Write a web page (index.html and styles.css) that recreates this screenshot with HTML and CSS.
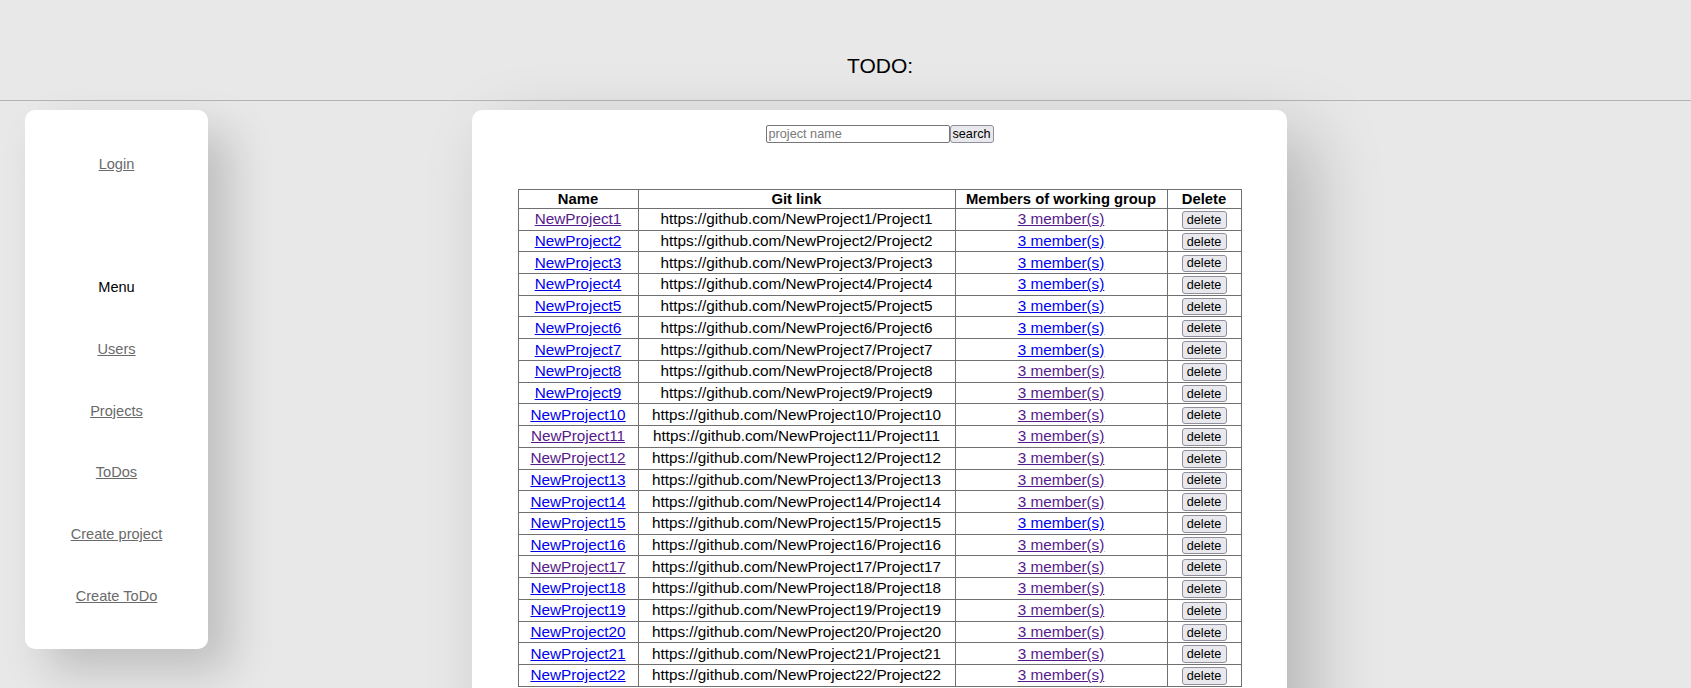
FILE: index.html
```html
<!DOCTYPE html>
<html lang="en">
<head>
<meta charset="utf-8">
<title>TODO</title>
<link rel="stylesheet" href="styles.css">
</head>
<body>
<header class="top">
  <div class="title">TODO:</div>
</header>
<div class="layout">
  <nav class="sidebar">
    <a class="side-link login" href="#login">Login</a>
    <div class="menu-title">Menu</div>
    <ul class="menu">
      <li><a class="side-link" href="#users">Users</a></li>
      <li><a class="side-link" href="#projects">Projects</a></li>
      <li><a class="side-link" href="#todos">ToDos</a></li>
      <li><a class="side-link" href="#create-project">Create project</a></li>
      <li><a class="side-link" href="#create-todo">Create ToDo</a></li>
    </ul>
  </nav>
  <main class="content">
    <form class="search">
      <input class="search-input" type="text" placeholder="project name">
      <button class="search-btn" type="button">search</button>
    </form>
    <table class="projects">
      <colgroup>
        <col class="c-name"><col class="c-git"><col class="c-mem"><col class="c-del">
      </colgroup>
      <thead>
        <tr><th>Name</th><th>Git link</th><th>Members of working group</th><th>Delete</th></tr>
      </thead>
      <tbody>
        <tr><td><a class="visited" href="#p1">NewProject1</a></td><td>https://github.com/NewProject1/Project1</td><td><a class="visited" href="#m1">3 member(s)</a></td><td><button class="del">delete</button></td></tr>
        <tr><td><a href="#p2">NewProject2</a></td><td>https://github.com/NewProject2/Project2</td><td><a href="#m2">3 member(s)</a></td><td><button class="del">delete</button></td></tr>
        <tr><td><a href="#p3">NewProject3</a></td><td>https://github.com/NewProject3/Project3</td><td><a href="#m3">3 member(s)</a></td><td><button class="del">delete</button></td></tr>
        <tr><td><a href="#p4">NewProject4</a></td><td>https://github.com/NewProject4/Project4</td><td><a href="#m4">3 member(s)</a></td><td><button class="del">delete</button></td></tr>
        <tr><td><a href="#p5">NewProject5</a></td><td>https://github.com/NewProject5/Project5</td><td><a href="#m5">3 member(s)</a></td><td><button class="del">delete</button></td></tr>
        <tr><td><a href="#p6">NewProject6</a></td><td>https://github.com/NewProject6/Project6</td><td><a href="#m6">3 member(s)</a></td><td><button class="del">delete</button></td></tr>
        <tr><td><a href="#p7">NewProject7</a></td><td>https://github.com/NewProject7/Project7</td><td><a href="#m7">3 member(s)</a></td><td><button class="del">delete</button></td></tr>
        <tr><td><a href="#p8">NewProject8</a></td><td>https://github.com/NewProject8/Project8</td><td><a class="visited" href="#m8">3 member(s)</a></td><td><button class="del">delete</button></td></tr>
        <tr><td><a href="#p9">NewProject9</a></td><td>https://github.com/NewProject9/Project9</td><td><a class="visited" href="#m9">3 member(s)</a></td><td><button class="del">delete</button></td></tr>
        <tr><td><a href="#p10">NewProject10</a></td><td>https://github.com/NewProject10/Project10</td><td><a class="visited" href="#m10">3 member(s)</a></td><td><button class="del">delete</button></td></tr>
        <tr><td><a class="visited" href="#p11">NewProject11</a></td><td>https://github.com/NewProject11/Project11</td><td><a class="visited" href="#m11">3 member(s)</a></td><td><button class="del">delete</button></td></tr>
        <tr><td><a class="visited" href="#p12">NewProject12</a></td><td>https://github.com/NewProject12/Project12</td><td><a class="visited" href="#m12">3 member(s)</a></td><td><button class="del">delete</button></td></tr>
        <tr><td><a href="#p13">NewProject13</a></td><td>https://github.com/NewProject13/Project13</td><td><a class="visited" href="#m13">3 member(s)</a></td><td><button class="del">delete</button></td></tr>
        <tr><td><a href="#p14">NewProject14</a></td><td>https://github.com/NewProject14/Project14</td><td><a class="visited" href="#m14">3 member(s)</a></td><td><button class="del">delete</button></td></tr>
        <tr><td><a href="#p15">NewProject15</a></td><td>https://github.com/NewProject15/Project15</td><td><a href="#m15">3 member(s)</a></td><td><button class="del">delete</button></td></tr>
        <tr><td><a href="#p16">NewProject16</a></td><td>https://github.com/NewProject16/Project16</td><td><a class="visited" href="#m16">3 member(s)</a></td><td><button class="del">delete</button></td></tr>
        <tr><td><a class="visited" href="#p17">NewProject17</a></td><td>https://github.com/NewProject17/Project17</td><td><a class="visited" href="#m17">3 member(s)</a></td><td><button class="del">delete</button></td></tr>
        <tr><td><a href="#p18">NewProject18</a></td><td>https://github.com/NewProject18/Project18</td><td><a class="visited" href="#m18">3 member(s)</a></td><td><button class="del">delete</button></td></tr>
        <tr><td><a href="#p19">NewProject19</a></td><td>https://github.com/NewProject19/Project19</td><td><a class="visited" href="#m19">3 member(s)</a></td><td><button class="del">delete</button></td></tr>
        <tr><td><a href="#p20">NewProject20</a></td><td>https://github.com/NewProject20/Project20</td><td><a class="visited" href="#m20">3 member(s)</a></td><td><button class="del">delete</button></td></tr>
        <tr><td><a href="#p21">NewProject21</a></td><td>https://github.com/NewProject21/Project21</td><td><a class="visited" href="#m21">3 member(s)</a></td><td><button class="del">delete</button></td></tr>
        <tr><td><a href="#p22">NewProject22</a></td><td>https://github.com/NewProject22/Project22</td><td><a class="visited" href="#m22">3 member(s)</a></td><td><button class="del">delete</button></td></tr>
      </tbody>
    </table>
  </main>
</div>
</body>
</html>
```
FILE: styles.css
```css
html, body {
  margin: 0;
  padding: 0;
  height: 688px;
  overflow: hidden;
}
body {
  background: #e8e8e8;
  font-family: "Liberation Sans", Arial, sans-serif;
  color: #000;
}
.top {
  height: 101px;
  border-bottom: 1px solid #b4b4b4;
  box-sizing: border-box;
  display: flex;
  align-items: flex-end;
  justify-content: center;
  padding-left: 69px;
  padding-bottom: 22px;
}
.title {
  font-size: 21px;
  line-height: 24px;
}
.layout {
  display: flex;
  align-items: flex-start;
  padding: 9px 0 0 25px;
  gap: 264px;
}
.sidebar {
  width: 183px;
  box-sizing: border-box;
  background: #fff;
  border-radius: 10px;
  box-shadow: 22px 22px 45px rgba(0, 0, 0, 0.18);
  padding: 44px 0 43px;
  display: flex;
  flex-direction: column;
  align-items: center;
  font-size: 14.6px;
  line-height: 20px;
}
.side-link {
  color: #6a6a6a;
  text-decoration: underline;
}
.menu-title {
  margin-top: 103px;
  color: #000;
}
.menu {
  list-style: none;
  margin: 41.8px 0 0;
  padding: 0;
  display: flex;
  flex-direction: column;
  align-items: center;
  gap: 41.8px;
}
.content {
  width: 815px;
  height: 620px;
  background: #fff;
  border-radius: 10px;
  box-shadow: 25px 25px 70px rgba(0, 0, 0, 0.22);
  padding-top: 14.5px;
  display: flex;
  flex-direction: column;
  align-items: center;
}
.search {
  display: flex;
  margin: 0 0 46px;
  height: 18px;
}
.search-input {
  box-sizing: border-box;
  width: 184px;
  height: 18px;
  margin: 0;
  padding: 0 2px;
  border: 1px solid #767676;
  border-radius: 2px;
  font-family: "Liberation Sans", Arial, sans-serif;
  font-size: 12.7px;
}
.search-input::placeholder {
  color: #7a7a7a;
}
.search-btn {
  box-sizing: border-box;
  width: 44px;
  height: 18px;
  margin: 0;
  padding: 0;
  border: 1px solid #8f8f9d;
  border-radius: 3px;
  background: #e9e9ed;
  font-family: "Liberation Sans", Arial, sans-serif;
  font-size: 12.7px;
  color: #000;
}
.projects {
  table-layout: fixed;
  width: 723px;
  border-collapse: collapse;
  font-size: 15.3px;
}
.c-name { width: 120px; }
.c-git { width: 317px; }
.c-mem { width: 212px; }
.c-del { width: 74px; }
.projects th,
.projects td {
  border: 1px solid #707070;
  padding: 0;
  text-align: center;
  white-space: nowrap;
  line-height: 18px;
}
.projects th {
  height: 18.4px;
  font-weight: bold;
  font-size: 14.8px;
}
.projects td {
  height: 20.72px;
}
.projects a {
  color: #0000ee;
  text-decoration: underline;
}
.projects a.visited {
  color: #551a8b;
}
.del {
  box-sizing: border-box;
  width: 45px;
  height: 17.5px;
  margin: 0;
  padding: 0;
  border: 1px solid #8f8f9d;
  border-radius: 3px;
  background: #e9e9ed;
  font-family: "Liberation Sans", Arial, sans-serif;
  font-size: 12.7px;
  color: #000;
  vertical-align: middle;
}
```
